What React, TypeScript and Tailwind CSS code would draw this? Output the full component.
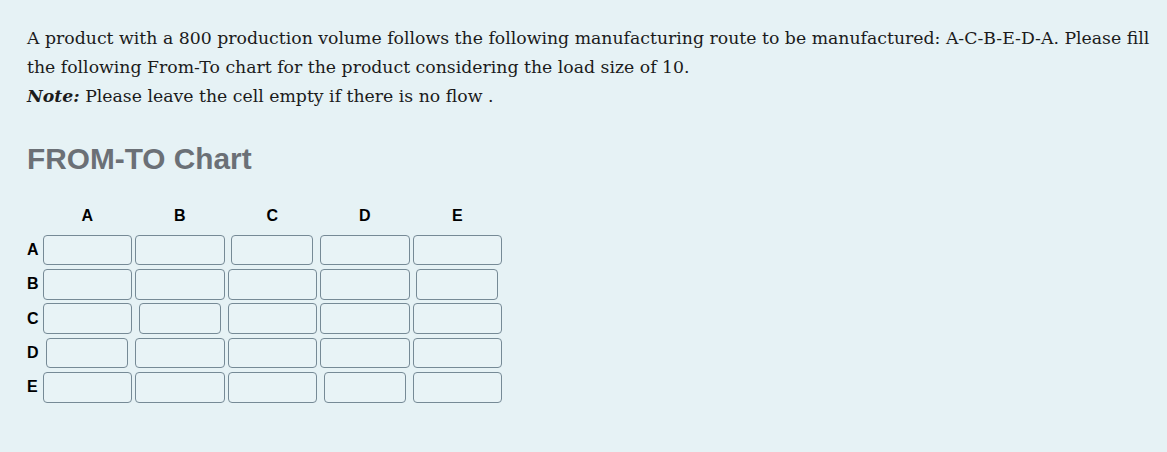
import React from 'react'

const rows = ['A', 'B', 'C', 'D', 'E']

// which inputs render narrower (row, col)
const narrow = new Set(['0-2', '1-4', '2-1', '3-0', '4-3'])

export default function App() {
  return (
    <div className="min-h-[452px] w-full bg-[#e6f2f5] px-[27px] pt-[24px] text-[#1b1b1b]">
      <p className="m-0 whitespace-nowrap font-['DejaVu_Serif',serif] text-[17.3px] leading-[29px]">
        A product with a 800 production volume follows the following manufacturing route to be manufactured: A-C-B-E-D-A. Please fill
        <br />
        the following From-To chart for the product considering the load size of 10.
        <br />
        <b className="italic">Note:</b> Please leave the cell empty if there is no flow .
      </p>

      <h2 className="mt-[31px] font-['Liberation_Sans',Arial,sans-serif] text-[29.8px] font-bold leading-[34px] text-[#6b7076]">
        FROM-TO Chart
      </h2>

      <div className="mt-[23px] grid grid-cols-[14px_repeat(5,92.5px)] font-['Liberation_Sans',Arial,sans-serif] text-[16px] font-bold text-black">
        <div />
        {rows.map((c) => (
          <div key={c} className="flex h-[34px] items-center justify-center">
            {c}
          </div>
        ))}
        {rows.map((r, ri) => (
          <React.Fragment key={r}>
            <div className="flex h-[34.3px] items-center">{r}</div>
            {rows.map((c, ci) => (
              <div key={c} className="flex h-[34.3px] items-center justify-center">
                <input
                  type="text"
                  className={`h-[30.5px] rounded-[4px] border border-[#768a96] bg-[#e8f3f6] ${
                    narrow.has(`${ri}-${ci}`) ? 'w-[82px]' : 'w-[89.5px]'
                  }`}
                />
              </div>
            ))}
          </React.Fragment>
        ))}
      </div>
    </div>
  )
}
